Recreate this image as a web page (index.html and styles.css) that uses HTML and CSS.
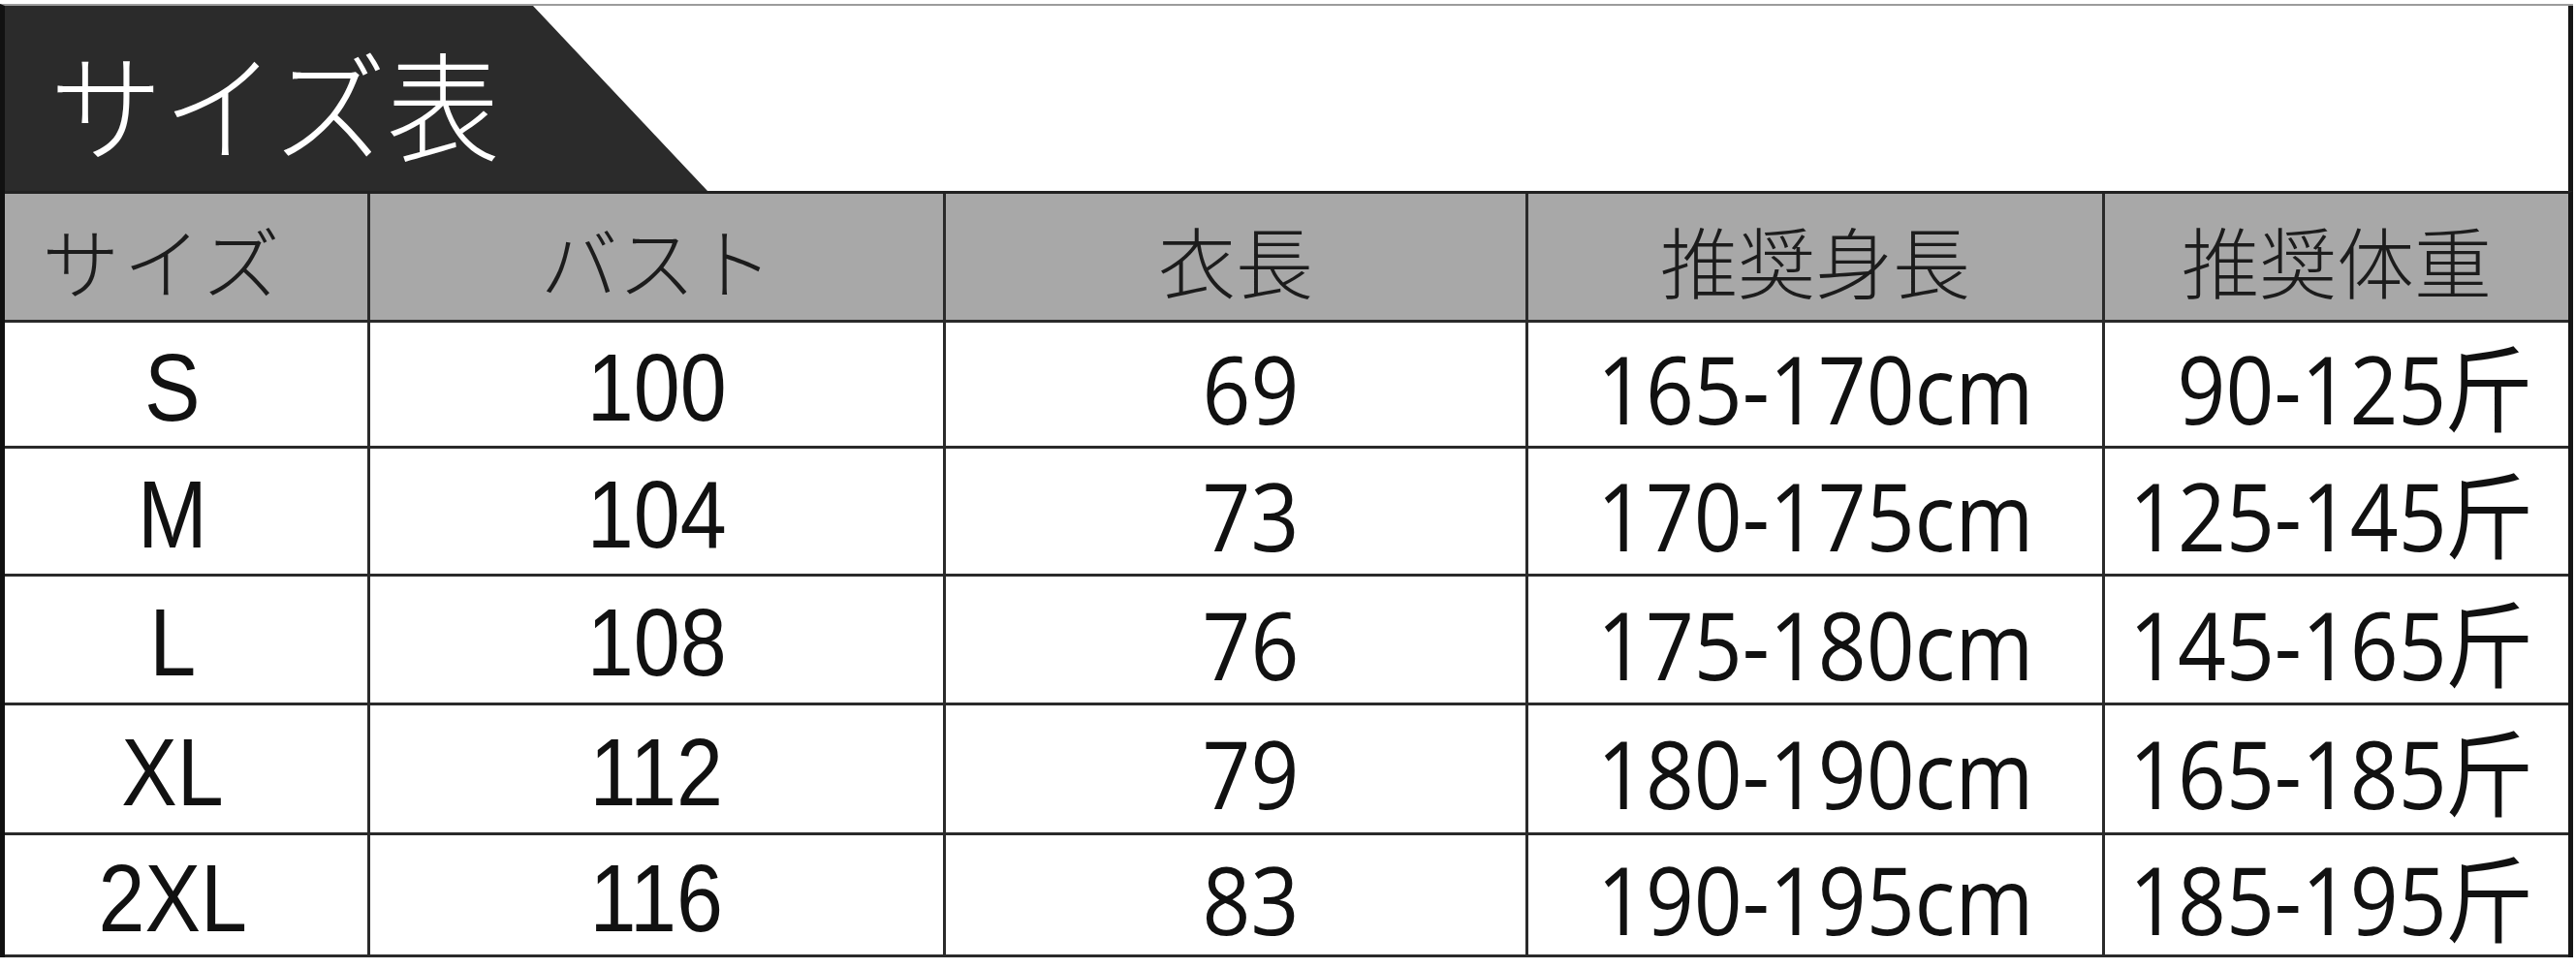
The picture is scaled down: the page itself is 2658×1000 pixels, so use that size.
FILE: index.html
```html
<!DOCTYPE html>
<html lang="ja">
<head>
<meta charset="utf-8">
<title>サイズ表</title>
<link rel="stylesheet" href="styles.css">
</head>
<body>
<div class="sheet">
  <div class="title-bar">
    <div class="tab"><span class="title">サイズ表</span></div>
  </div>
  <div class="table">
    <div class="cell head c1"><span>サイズ</span></div>
    <div class="cell head"><span>バスト</span></div>
    <div class="cell head"><span>衣長</span></div>
    <div class="cell head"><span>推奨身長</span></div>
    <div class="cell head c5"><span>推奨体重</span></div>

    <div class="cell c1 arial"><span>S</span></div>
    <div class="cell arial"><span>100</span></div>
    <div class="cell num c3"><span>69</span></div>
    <div class="cell num"><span>165-170cm</span></div>
    <div class="cell num c5 right"><span>90-125斤</span></div>

    <div class="cell c1 arial"><span>M</span></div>
    <div class="cell arial"><span>104</span></div>
    <div class="cell num c3"><span>73</span></div>
    <div class="cell num"><span>170-175cm</span></div>
    <div class="cell num c5 right"><span>125-145斤</span></div>

    <div class="cell c1 arial"><span>L</span></div>
    <div class="cell arial"><span>108</span></div>
    <div class="cell num c3"><span>76</span></div>
    <div class="cell num"><span>175-180cm</span></div>
    <div class="cell num c5 right"><span>145-165斤</span></div>

    <div class="cell c1 arial"><span>XL</span></div>
    <div class="cell arial"><span>112</span></div>
    <div class="cell num c3"><span>79</span></div>
    <div class="cell num"><span>180-190cm</span></div>
    <div class="cell num c5 right"><span>165-185斤</span></div>

    <div class="cell c1 arial"><span>2XL</span></div>
    <div class="cell arial"><span>116</span></div>
    <div class="cell num c3"><span>83</span></div>
    <div class="cell num"><span>190-195cm</span></div>
    <div class="cell num c5 right"><span>185-195斤</span></div>
  </div>
</div>
</body>
</html>
```
FILE: styles.css
```css
html, body {
  margin: 0;
  padding: 0;
  background: #ffffff;
}

body {
  width: 2658px;
  height: 1000px;
  overflow: hidden;
  font-family: "Noto Sans CJK JP", "Noto Sans", sans-serif;
}

.sheet {
  box-sizing: border-box;
  width: 2655px;
  margin-top: 4px;
  border-top: 2px solid #9c9c9c;
  border-left: 5px solid #111111;
}

.title-bar {
  box-sizing: border-box;
  width: 2650px;
  height: 191px;
  display: flex;
  border-right: 5px solid #151515;
}

.tab {
  width: 725px;
  height: 100%;
  background: #2b2b2b;
  clip-path: polygon(0 0, 545px 0, 100% 100%, 0 100%);
  display: flex;
  align-items: center;
  padding-left: 46px;
  box-sizing: border-box;
}

.title {
  color: #ffffff;
  font-family: "Noto Sans CJK JP", sans-serif;
  font-weight: 300;
  font-size: 122px;
  line-height: 1.2;
  margin-top: 6px;
  display: inline-block;
  transform: scaleX(0.96);
  transform-origin: left center;
}

.table {
  box-sizing: border-box;
  width: 2650px;
  display: grid;
  grid-template-columns: 377px 594px 601px 595px 478px;
  grid-template-rows: 133px 130px 132px 133px 134px 126px;
  border-top: 3px solid #222222;
  border-right: 5px solid #151515;
}

.cell {
  box-sizing: border-box;
  min-width: 0;
  border-right: 3px solid #2a2a2a;
  border-bottom: 3px solid #2a2a2a;
  display: flex;
  align-items: center;
  justify-content: center;
  color: #111111;
  background: #ffffff;
}

.cell.c5 {
  border-right: none;
}

.cell span {
  display: inline-block;
  white-space: nowrap;
  line-height: 1.2;
}

.cell.c1 {
  padding-right: 28px;
}

.cell.c3 {
  padding-left: 30px;
}

.head {
  background: #a8a8a8;
}

.head span {
  font-family: "Noto Sans CJK JP", sans-serif;
  font-weight: 300;
  font-size: 80px;
  color: #1c1c1c;
  margin-top: 4px;
}

.head.c1 span {
  letter-spacing: 4px;
  margin-right: 20px;
}

.arial span {
  font-family: "Liberation Sans", Arial, sans-serif;
  font-size: 98px;
  transform: scaleX(0.88);
  margin-top: 8px;
}

.num span {
  font-family: "Open Sans", "Noto Sans CJK SC", sans-serif;
  font-size: 97px;
  transform: scaleX(0.9);
  margin-top: 8px;
}

.right {
  justify-content: flex-end;
  padding-right: 38px;
}

.right span {
  transform-origin: right center;
}
```
